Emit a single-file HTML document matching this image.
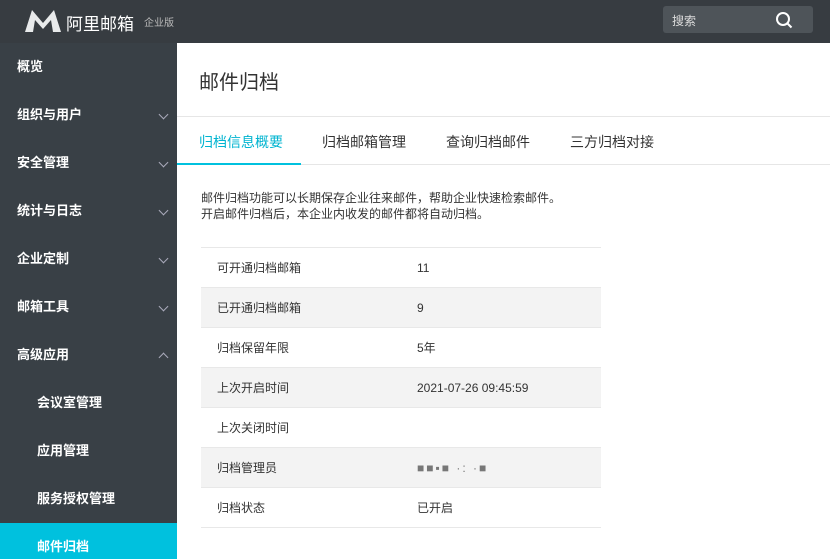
<!DOCTYPE html><html><head><meta charset="utf-8"><style>
*{margin:0;padding:0;box-sizing:border-box}
html,body{width:830px;height:559px;overflow:hidden}
body{font-family:"Liberation Sans","Noto Sans CJK SC",sans-serif;background:#fff;position:relative}
.hd{position:absolute;left:0;top:0;width:830px;height:43px;background:#373c41}
.sb{position:absolute;left:0;top:43px;width:177px;height:516px;background:#394046;overflow:hidden}
.it{height:48px;line-height:48px;color:#fff;font-size:13px;font-weight:bold;padding-left:17px;position:relative}
.it.sub{padding-left:37px}
.it .ch{position:absolute;right:10px;top:20px;width:7px;height:7px;border-right:1.3px solid #aab;border-bottom:1.3px solid #aab;transform:rotate(45deg)}
.it .up{top:23px;transform:rotate(-135deg)}
.act{background:#00c1de}
.title{position:absolute;left:199px;top:66px;font-size:20px;color:#333}
.line{position:absolute;left:177px;width:653px;height:1px;background:#e6e6e6}
.tab{position:absolute;top:132px;font-size:14px;color:#333}
.desc{position:absolute;left:201px;top:190px;font-size:12px;color:#333;line-height:16px}
table{position:absolute;left:201px;top:247px;width:400px;border-collapse:collapse;font-size:12px;color:#333}
td{height:40px;border-top:1px solid #e8e8e8;border-bottom:1px solid #e8e8e8}
td:first-child{padding-left:16px;width:216px}
tr:nth-child(even) td{background:#f3f3f3}
</style></head><body>
<div class="hd">
<svg style="position:absolute;left:25px;top:10px" width="36" height="22" viewBox="0 0 36 22"><path d="M0 22 L7 0 L18 13 L29 0 L36 22 L28 22 L26 10 L18 19 L10 10 L8 22Z" fill="#e8eaeb"/></svg>
<div style="position:absolute;left:66px;top:10px;color:#fff;font-size:17px;letter-spacing:0px">阿里邮箱</div>
<div style="position:absolute;left:144px;top:14px;color:#bbb;font-size:10px">企业版</div>
<div style="position:absolute;left:663px;top:6px;width:150px;height:27px;background:#4e5459;border-radius:3px"><span style="position:absolute;left:9px;top:6px;color:#ddd;font-size:12px">搜索</span>
<svg style="position:absolute;left:112px;top:5px" width="18" height="18"><circle cx="8" cy="8" r="6" fill="none" stroke="#fff" stroke-width="2"/><path d="M12.5 12.5L16.5 16.5" stroke="#fff" stroke-width="2"/></svg></div>
</div>
<div class="sb">
<div class="it">概览</div>
<div class="it">组织与用户<i class="ch"></i></div>
<div class="it">安全管理<i class="ch"></i></div>
<div class="it">统计与日志<i class="ch"></i></div>
<div class="it">企业定制<i class="ch"></i></div>
<div class="it">邮箱工具<i class="ch"></i></div>
<div class="it">高级应用<i class="ch up"></i></div>
<div class="it sub">会议室管理</div>
<div class="it sub">应用管理</div>
<div class="it sub">服务授权管理</div>
<div class="it sub act">邮件归档</div>
</div>
<div class="title">邮件归档</div>
<div class="line" style="top:116px"></div>
<div class="line" style="top:164px"></div>
<div class="tab" style="left:199px;color:#00b4d0">归档信息概要</div>
<div style="position:absolute;left:177px;top:163px;width:124px;height:2px;background:#00c1de"></div>
<div class="tab" style="left:322px">归档邮箱管理</div>
<div class="tab" style="left:446px">查询归档邮件</div>
<div class="tab" style="left:570px">三方归档对接</div>
<div class="desc">邮件归档功能可以长期保存企业往来邮件，帮助企业快速检索邮件。<br>开启邮件归档后，本企业内收发的邮件都将自动归档。</div>
<table>
<tr><td>可开通归档邮箱</td><td>11</td></tr>
<tr><td>已开通归档邮箱</td><td>9</td></tr>
<tr><td>归档保留年限</td><td>5年</td></tr>
<tr><td>上次开启时间</td><td>2021-07-26 09:45:59</td></tr>
<tr><td>上次关闭时间</td><td></td></tr>
<tr><td>归档管理员</td><td><span style="color:#777;letter-spacing:2px">■■▪■ ·: ·■</span></td></tr>
<tr><td>归档状态</td><td>已开启</td></tr>
</table>
</body></html>
